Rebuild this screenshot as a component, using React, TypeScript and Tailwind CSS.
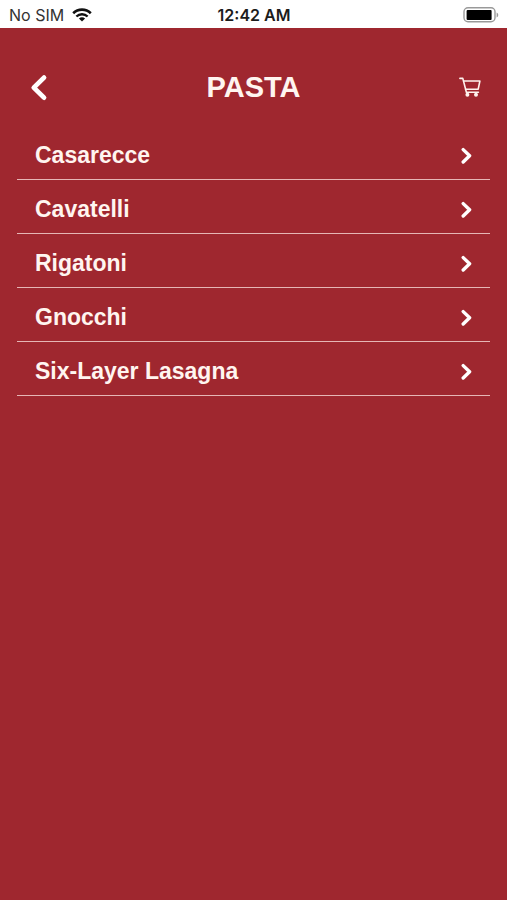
const items = [
  "Casarecce",
  "Cavatelli",
  "Rigatoni",
  "Gnocchi",
  "Six-Layer Lasagna",
];

function StatusBar() {
  return (
    <div className="grid grid-cols-3 items-center h-7 pt-0.5 pl-[9px] pr-2 bg-white text-[#1c1c1c] font-['Inter',sans-serif]">
      <div className="flex items-center gap-2">
        <span className="text-base leading-5 text-[#333]">No SIM</span>
        <svg width="20" height="14" viewBox="0 0 20 14" fill="none" stroke="#111" aria-hidden="true">
          <path d="M1.2 5.2a12.6 12.6 0 0 1 17.6 0" strokeWidth="2.6" />
          <path d="M4.4 8.5a8 8 0 0 1 11.2 0" strokeWidth="2.4" />
          <path d="M10 13.6 6.9 10.6a4.5 4.5 0 0 1 6.2 0Z" fill="#111" stroke="none" />
        </svg>
      </div>
      <span className="text-center text-base leading-5 font-semibold whitespace-nowrap">
        12:42 AM
      </span>
      <svg className="justify-self-end" width="36" height="16" viewBox="0 0 36 16" aria-hidden="true">
        <rect x="1" y="0.8" width="31" height="14" rx="4" fill="white" stroke="#999" strokeWidth="1.4" />
        <rect x="3.6" y="3" width="25" height="10" rx="1" fill="#000" />
        <path d="M33.6 5.4c2.2.8 2.2 4.2 0 5Z" fill="#999" />
      </svg>
    </div>
  );
}

function CartIcon() {
  return (
    <svg width="22" height="20" viewBox="0 0 22 20" fill="none" stroke="#fff3ee" strokeWidth="1.6" strokeLinejoin="round" strokeLinecap="round" aria-hidden="true">
      <path d="M.9 1.4h2.9l3.6 13.8h12" />
      <path d="M4.6 4h16.3l-1.7 8.2H6.6" />
      <circle cx="8.4" cy="17.8" r="1.2" fill="#fff3ee" />
      <circle cx="17" cy="17.8" r="1.2" fill="#fff3ee" />
    </svg>
  );
}

export default function App() {
  return (
    <div className="min-h-screen bg-[#9f272f] text-[#fff5f0] font-['Liberation_Sans',Arial,sans-serif]">
      <StatusBar />
      <header className="grid grid-cols-[1fr_auto_1fr] items-center h-[98px] pt-5 px-[26px]">
        <button type="button" aria-label="Back" className="justify-self-start pl-1">
          <svg width="18" height="28" viewBox="0 0 18 28" fill="none" stroke="white" strokeWidth="4.8" strokeLinecap="round" strokeLinejoin="round" aria-hidden="true">
            <path d="M14 4.6 3.8 14.6 14 24.6" />
          </svg>
        </button>
        <h1 className="text-[29px] leading-8 font-bold">PASTA</h1>
        <button type="button" aria-label="Cart" className="justify-self-end">
          <CartIcon />
        </button>
      </header>
      <ul className="px-[17px]">
        {items.map((item) => (
          <li key={item} className="border-b border-[#e6b6b5]">
            <a href="#" className="flex items-center justify-between h-[53px] pt-1 px-[18px]">
              <span className="text-[23px] leading-7 font-bold">{item}</span>
              <svg width="12" height="18" viewBox="0 0 12 18" fill="none" stroke="white" strokeWidth="3.4" strokeLinecap="round" strokeLinejoin="round" aria-hidden="true">
                <path d="M3.2 3.6 9.6 9.8 3.2 16" />
              </svg>
            </a>
          </li>
        ))}
      </ul>
    </div>
  );
}
